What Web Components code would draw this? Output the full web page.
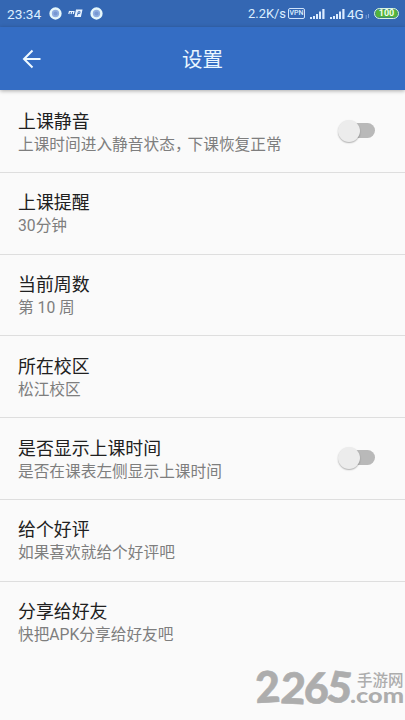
<!DOCTYPE html>
<html lang="zh-CN">
<head>
<meta charset="utf-8">
<title>设置</title>
<style>
html,body{margin:0;height:100%}
body{width:405px;height:720px;overflow:hidden;background:#fafafa;font-family:Roboto,"Noto Sans CJK SC",sans-serif}
</style>
</head>
<body>
<settings-page></settings-page>
<script>
function define(name, html) {
  const t = document.createElement('template');
  t.innerHTML = html;
  customElements.define(name, class extends HTMLElement {
    constructor() {
      super();
      this.attachShadow({ mode: 'open' }).append(t.content.cloneNode(true));
    }
  });
}

define('signal-bars', `<style>:host{display:block;width:15px;height:11px}svg{display:block}</style>
<svg width="15" height="11" fill="#dcecff"><path d="M0 9h2v2H0zM3 8h2v3H3zM6 6h2v5H6zM9 3.500h2V11H9zM12.300 1h2.200v10h-2.200z"/></svg>`);

define('notice-dot', `<style>:host{display:block;width:13px;height:13px}svg{display:block}</style>
<svg width="13" height="13"><circle cx="6.500" cy="6.500" r="4.900" fill="#8faee0" stroke="#e6f7fb" stroke-width="2.500"/><circle cx="6.500" cy="6.500" r="2" fill="#7898d2"/></svg>`);

define('status-bar', `<style>
:host{display:flex;align-items:center;height:27px;box-sizing:border-box;padding:0 6px 0 7px;background:#3467b3;color:#dcefff;font-size:12.500px;line-height:16px}
.time{width:35px;margin-right:7px;font-size:13.700px}
.mp{display:block;margin:0 7px 0 6px}
.gap{flex:1}
.speed{font-size:12.900px;width:38px;white-space:nowrap}
.vpn{width:15px;height:9px;border:1px solid #cfe3fb;border-radius:2px;font-size:7px;line-height:9px;text-align:center;font-weight:500;margin:0 5px 0 2px}
signal-bars + signal-bars{margin-left:5px}
.net{font-size:13.500px;margin-left:2px;width:18px}
.data{display:block;margin:5px 4px 0 0}
.battery{box-sizing:border-box;width:25px;height:11px;border:1px solid #d9f4de;border-radius:6px;background:#51b33b;box-shadow:inset 0 0 0 .5px #3467b3;color:#f3fff0;font-size:9px;font-weight:700;line-height:9.500px;text-align:center}
</style>
<span class="time">23:34</span><notice-dot></notice-dot>
<svg class="mp" width="15" height="9" fill="none" stroke="#e8f3ff" stroke-width="1.200"><path d="M.8 5l.8-3M1.500 2.500h2.200L3 5M3.700 2.500h2.200L5.300 5"/><path d="M8.500 1h5.300l-1.400 6.500H7.200z" fill="#e8f3ff"/><path d="M9.400 6.500l.9-3.800h1.800l-.4 1.800H10" stroke="#3467b3" stroke-width=".9"/></svg>
<notice-dot></notice-dot><span class="gap"></span>
<span class="speed">2.2K/s</span><span class="vpn">VPN</span><signal-bars></signal-bars><signal-bars></signal-bars><span class="net">4G</span>
<svg class="data" width="5" height="5" stroke="#8fb0e4" stroke-width=".8"><path d="M1.200 5V1M3.500 0v4"/></svg>
<span class="battery">100</span>`);

define('app-bar', `<style>
:host{display:grid;grid-template-columns:62px 1fr 62px;align-items:center;height:63px;background:#346dc4;color:#e9f6ff;box-shadow:0 1px 4px rgba(0,0,0,.32);position:relative}
svg{display:block;margin:1px 0 0 22px}
.title{text-align:center;font-size:20.500px;line-height:28px;padding-top:3px}
</style>
<svg width="20" height="20" fill="none" stroke="#effaff" stroke-width="2"><path d="M18.500 10H2M10.500 1.500L2 10l8.500 8.500"/></svg>
<div class="title"><slot></slot></div>`);

define('toggle-switch', `<style>
:host{display:flex;align-items:center;width:36.500px;height:24px}
.knob{flex:none;width:22px;height:22px;border-radius:50%;background:#ececec;box-shadow:0 1px 1.500px rgba(0,0,0,.3);z-index:1}
.track{width:24px;height:15px;border-radius:0 8px 8px 0;background:#b9b9b9;margin-left:-9px}
</style><span class="knob"></span><span class="track"></span>`);

define('setting-row', `<style>
:host{display:flex;align-items:flex-start;justify-content:space-between;box-sizing:border-box;height:81.800px;padding:18.500px 30.500px 0 18px;border-bottom:1.500px solid #dedede}
:host(:last-child){border-bottom:0}
.title{font-size:17.900px;line-height:24px;color:#202020}
.summary{font-size:15.700px;line-height:22px;color:#7e7e7e;white-space:nowrap}
::slotted(toggle-switch){margin-top:9px}
</style>
<div><div class="title"><slot name="title"></slot></div><div class="summary"><slot></slot></div></div><slot name="control"></slot>`);

define('site-mark', `<style>:host{position:absolute;left:245px;top:650px;width:160px;height:70px}svg{display:block;overflow:visible}</style>
<svg width="160" height="70" fill="#adadad" stroke="#adadad" stroke-linejoin="round" font-family="Lato,sans-serif" font-weight="900">
<g font-size="43" stroke-width=".6"><text transform="translate(11 53) rotate(-3)">2</text><text transform="translate(35 53) rotate(3)">2</text><text transform="translate(58.500 53) rotate(2)">6</text><text transform="translate(80.500 51) rotate(7)">5</text></g>
<text x="105" y="52.500" font-size="21" stroke="none" textLength="54" lengthAdjust="spacingAndGlyphs">.com</text>
<text x="112" y="36" font-family="Noto Sans CJK SC,sans-serif" font-size="15.500" font-weight="500" stroke="none">手游网</text></svg>`);

define('settings-page', `<style>:host{display:block;position:relative;width:405px;height:720px;overflow:hidden;background:#fafafa}main{display:flex;flex-direction:column;padding-top:1px}setting-row{flex:none}.comma{letter-spacing:-3px}</style>
<status-bar></status-bar><app-bar>设置</app-bar>
<main>
<setting-row><span slot="title">上课静音</span>上课时间进入静音状态<span class="comma">，</span>下课恢复正常<toggle-switch slot="control"></toggle-switch></setting-row>
<setting-row><span slot="title">上课提醒</span>30分钟</setting-row>
<setting-row><span slot="title">当前周数</span>第 10 周</setting-row>
<setting-row><span slot="title">所在校区</span>松江校区</setting-row>
<setting-row><span slot="title">是否显示上课时间</span>是否在课表左侧显示上课时间<toggle-switch slot="control"></toggle-switch></setting-row>
<setting-row><span slot="title">给个好评</span>如果喜欢就给个好评吧</setting-row>
<setting-row><span slot="title">分享给好友</span>快把APK分享给好友吧</setting-row>
</main><site-mark></site-mark>`);
</script>
</body>
</html>
